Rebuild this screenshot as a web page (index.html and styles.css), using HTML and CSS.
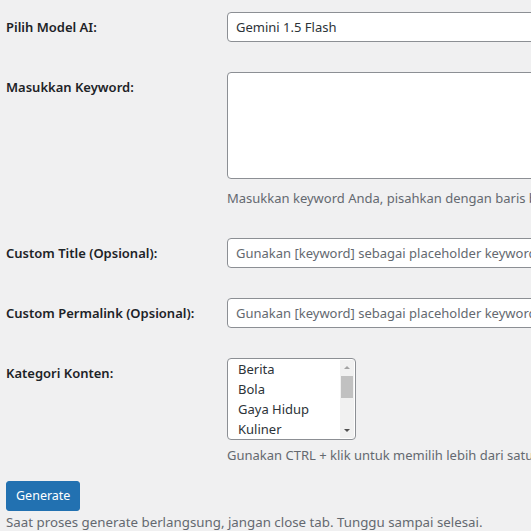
FILE: index.html
```html
<!DOCTYPE html>
<html lang="id">
<head>
<meta charset="utf-8">
<link rel="stylesheet" href="styles.css">
</head>
<body>
<form class="form">
  <div class="row row-first">
    <label class="label">Pilih Model AI:</label>
    <div class="field">
      <div class="select">Gemini 1.5 Flash</div>
    </div>
  </div>
  <div class="row">
    <label class="label">Masukkan Keyword:</label>
    <div class="field">
      <textarea class="textarea"></textarea>
      <p class="description">Masukkan keyword Anda, pisahkan dengan baris baru.</p>
    </div>
  </div>
  <div class="row">
    <label class="label">Custom Title (Opsional):</label>
    <div class="field">
      <input class="input" type="text" placeholder="Gunakan [keyword] sebagai placeholder keyword">
    </div>
  </div>
  <div class="row">
    <label class="label">Custom Permalink (Opsional):</label>
    <div class="field">
      <input class="input" type="text" placeholder="Gunakan [keyword] sebagai placeholder keyword">
    </div>
  </div>
  <div class="row">
    <label class="label">Kategori Konten:</label>
    <div class="field">
      <div class="listbox">
        <div class="options">
          <div class="option">Berita</div>
          <div class="option">Bola</div>
          <div class="option">Gaya Hidup</div>
          <div class="option">Kuliner</div>
        </div>
        <div class="scrollbar">
          <div class="arrow arrow-up"></div>
          <div class="track"><div class="thumb"></div></div>
          <div class="arrow arrow-down"></div>
        </div>
      </div>
      <p class="description description-tight">Gunakan CTRL + klik untuk memilih lebih dari satu kategori.</p>
    </div>
  </div>
  <div class="submit">
    <button class="button" type="button">Generate</button>
    <p class="note">Saat proses generate berlangsung, jangan close tab. Tunggu sampai selesai.</p>
  </div>
</form>
</body>
</html>
```
FILE: styles.css
```css
html, body {
  margin: 0;
  padding: 0;
  background: #f0f0f1;
  overflow: hidden;
}
body {
  font-family: "Noto Sans", "Open Sans", sans-serif;
  font-size: 13px;
  color: #3c434a;
  width: 531px;
  height: 531px;
}
.form {
  padding-left: 6px;
  width: 525px;
  overflow: hidden;
}
.row {
  display: grid;
  grid-template-columns: 221px 1fr;
  padding: 15px 0;
}
.row-first {
  padding-top: 12px;
}
.label {
  font-weight: 600;
  font-size: 13px;
  line-height: 18px;
  color: #1d2327;
  padding-top: 6px;
}
.field {
  min-width: 0;
}
.select, .input, .textarea {
  box-sizing: border-box;
  display: block;
  width: 600px;
  height: 30px;
  border: 1px solid #8c8f94;
  border-radius: 4px;
  background: #fff;
  font-family: inherit;
  font-size: 13px;
  color: #2c3338;
  margin: 0;
}
.select {
  line-height: 28px;
  padding: 0 8px;
}
.input {
  padding: 0 8px;
  outline: none;
}
.input::placeholder {
  color: #646970;
  opacity: 1;
}
.textarea {
  height: 107px;
  resize: none;
  padding: 4px 8px;
}
.description {
  margin: 10px 0 0;
  font-size: 13px;
  line-height: 19px;
  color: #646970;
  white-space: nowrap;
}
.description-tight {
  margin-top: 6px;
}
.listbox {
  box-sizing: border-box;
  width: 129px;
  height: 82px;
  border: 1px solid #8c8f94;
  border-radius: 4px;
  background: #fff;
  display: flex;
  overflow: hidden;
}
.options {
  flex: 1;
  padding: 0 0 0 10px;
}
.option {
  font-size: 13px;
  line-height: 20px;
  color: #2c3338;
}
.scrollbar {
  width: 14px;
  margin: 1px 1px 1px 0;
  display: flex;
  flex-direction: column;
  background: #f1f1f1;
}
.arrow {
  height: 15px;
  position: relative;
}
.arrow::after {
  content: "";
  position: absolute;
  left: 4px;
  border-left: 3px solid transparent;
  border-right: 3px solid transparent;
}
.arrow-up::after {
  top: 6px;
  border-bottom: 3px solid #a3a3a3;
}
.arrow-down::after {
  top: 6px;
  border-top: 3px solid #505050;
}
.track {
  flex: 1;
  padding: 1px 1px;
}
.thumb {
  height: 22px;
  background: #c1c1c1;
}
.submit {
  padding-top: 1px;
}
.button {
  display: block;
  height: 30px;
  padding: 0 9px;
  border: 1px solid #2271b1;
  border-radius: 3px;
  background: #2271b1;
  color: #fff;
  font-family: inherit;
  font-size: 12.5px;
  line-height: 28px;
  margin: 0;
}
.note {
  margin: 2px 0 0;
  font-size: 13.3px;
  line-height: 19px;
  color: #646970;
  white-space: nowrap;
}
```
